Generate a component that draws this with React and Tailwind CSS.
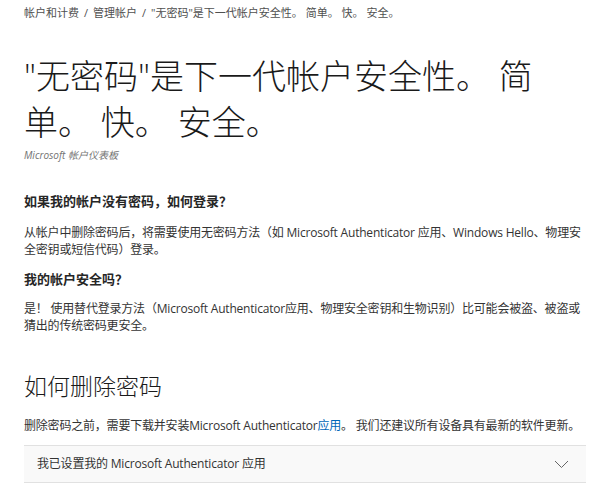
export default function App() {
  const font = { fontFamily: '"Segoe UI", "Open Sans", "Noto Sans CJK SC", sans-serif' };
  return (
    <div className="min-h-screen bg-white text-[#262626]" style={font}>
      <div className="w-[586px] pl-6 pt-[5px]">
        <nav className="text-[11px] text-[#505050] leading-[16px]">
          <span>帐户和计费</span>
          <span className="mx-[5px]">/</span>
          <span>管理帐户</span>
          <span className="mx-[5px]">/</span>
          <span>"无密码"是下一代帐户安全性。 简单。 快。 安全。</span>
        </nav>

        <h1 className="mt-[32px] w-[530px] text-[34px] font-light leading-[46px] text-[#1a1a1a]">
          "无密码"是下一代帐户安全性。 简单。 快。 安全。
        </h1>

        <p className="mt-[3px] text-[10px] italic text-[#737373]">Microsoft 帐户仪表板</p>

        <h3 className="mt-[28px] text-[13px] font-bold leading-[20px]">如果我的帐户没有密码，如何登录？</h3>
        <p className="mt-[13px] text-[12px] leading-[17px] tracking-[-0.2px] text-[#333]">
          从帐户中删除密码后，将需要使用无密码方法（如 Microsoft Authenticator 应用、Windows Hello、物理安全密钥或短信代码）登录。
        </p>

        <h3 className="mt-[11px] text-[13px] font-bold leading-[20px]">我的帐户安全吗？</h3>
        <p className="mt-[11px] text-[12px] leading-[17px] tracking-[-0.2px] text-[#333]">
          是！ 使用替代登录方法（Microsoft Authenticator应用、物理安全密钥和生物识别）比可能会被盗、被盗或猜出的传统密码更安全。
        </p>

        <h2 className="mt-[36px] text-[23px] font-light leading-[32px] text-[#1a1a1a]">如何删除密码</h2>
        <p className="mt-[15px] text-[12px] leading-[17px] tracking-[-0.2px] text-[#333] whitespace-nowrap">
          删除密码之前，需要下载并安装Microsoft Authenticator<a className="text-[#0067b8]">应用</a>。 我们还建议所有设备具有最新的软件更新。
        </p>

        <div className="mt-[11px] flex h-[38px] items-center justify-between border-y border-[#e1e1e1] bg-[#f9f9f9] pl-[13px] pr-[17px]">
          <span className="text-[12px] tracking-[-0.2px] text-[#333]">我已设置我的 Microsoft Authenticator 应用</span>
          <svg width="15" height="9" viewBox="0 0 15 9" fill="none">
            <path d="M1 1l6.5 6.5L14 1" stroke="#666" strokeWidth="1" />
          </svg>
        </div>
      </div>
    </div>
  );
}
